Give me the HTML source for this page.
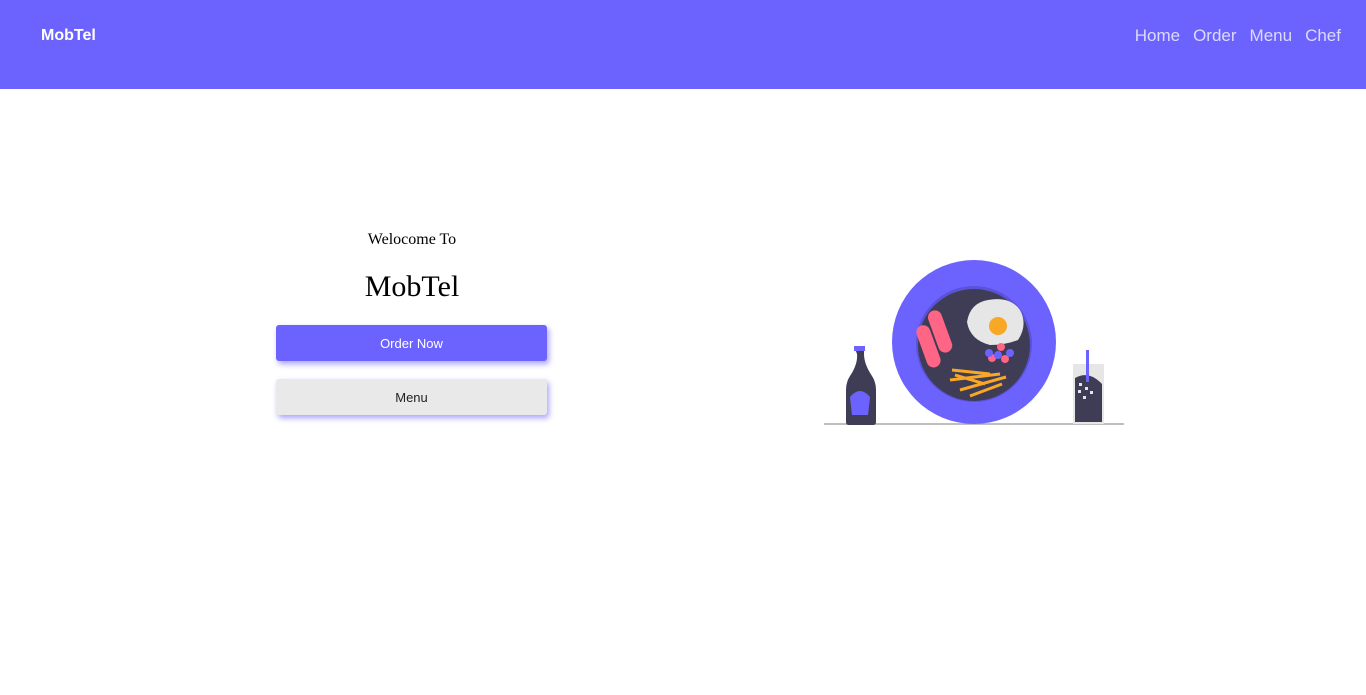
<!DOCTYPE html>
<html><head><style>
body{margin:0;width:1366px;height:695px;background:#fff;font-family:"Liberation Sans",sans-serif;overflow:hidden;position:relative}
.hdr{position:absolute;left:0;top:0;width:1366px;height:89px;background:#6c63ff}
.logo{position:absolute;left:41px;top:27px;color:#fff;font-weight:bold;font-size:16px}
.nav{position:absolute;right:25px;top:26px;color:#dcdaff;font-size:17px}
.nav span{margin-left:13px}
.t1{position:absolute;left:276px;width:272px;text-align:center;top:231px;font-family:"Liberation Serif",serif;font-size:16px;color:#000}
.t2{position:absolute;left:276px;width:272px;text-align:center;top:270px;font-family:"Liberation Serif",serif;font-size:30px;color:#000}
.b{position:absolute;left:276px;width:271px;height:36px;border-radius:3px;text-align:center;line-height:37px;font-size:13px;box-shadow:2px 3px 6px rgba(108,99,255,.6)}
</style></head><body>
<div class="hdr"><div class="logo">MobTel</div><div class="nav"><span>Home</span><span>Order</span><span>Menu</span><span>Chef</span></div></div>
<div class="t1">Welocome To</div>
<div class="t2">MobTel</div>
<div class="b" style="top:325px;background:#6c63ff;color:#fff">Order Now</div>
<div class="b" style="top:379px;background:#e9e9e9;color:#222">Menu</div>
<svg style="position:absolute;left:0;top:0" width="1366" height="695">
<line x1="824" y1="424" x2="1124" y2="424" stroke="#aaa" stroke-width="1.5"/>
<circle cx="974" cy="342" r="82" fill="#6c63ff"/>
<circle cx="974" cy="344" r="58" fill="#5a52d8"/>
<circle cx="974" cy="345" r="56" fill="#3f3d56"/>
<path d="M988 300 Q1010 296 1020 310 Q1028 325 1018 340 Q1005 345 990 345 Q970 340 967 322 Q970 303 988 300Z" fill="#e6e6e6"/>
<circle cx="998" cy="326" r="9" fill="#f9a826"/>
<g transform="rotate(-20 940 340)"><rect x="920" y="320" width="14" height="44" rx="7" fill="#ff6584"/><rect x="936" y="310" width="14" height="44" rx="7" fill="#ff6584"/></g>
<circle cx="1001" cy="347" r="4" fill="#ff6584"/><circle cx="992" cy="358" r="4" fill="#ff6584"/><circle cx="1005" cy="359" r="4" fill="#ff6584"/>
<circle cx="989" cy="353" r="4" fill="#6c63ff"/><circle cx="998" cy="355" r="4" fill="#6c63ff"/><circle cx="1010" cy="353" r="4" fill="#6c63ff"/>
<g stroke="#f9a826" stroke-width="3"><line x1="952" y1="370" x2="990" y2="374"/><line x1="950" y1="380" x2="1000" y2="374"/><line x1="960" y1="390" x2="1006" y2="377"/><line x1="970" y1="396" x2="1002" y2="384"/><line x1="955" y1="375" x2="985" y2="384"/></g>
<path d="M854 346 h10 v8 q0 10 8 22 q4 6 4 14 v32 q0 3 -3 3 h-24 q-3 0 -3 -3 v-32 q0 -8 4 -14 q8 -12 7 -22z" fill="#3f3d56"/>
<rect x="854" y="346" width="11" height="5" fill="#6c63ff"/>
<path d="M850 397 q10 -12 20 0 l-2 18 h-16z" fill="#6c63ff"/>
<rect x="1073" y="364" width="31" height="60" fill="#e6e6e6"/>
<path d="M1075 378 q14 -8 27 6 v38 h-27z" fill="#3f3d56"/>
<rect x="1086" y="350" width="3" height="32" fill="#6c63ff"/>
<g fill="#e6e6e6"><rect x="1079" y="383" width="3" height="3"/><rect x="1085" y="387" width="3" height="3"/><rect x="1078" y="390" width="3" height="3"/><rect x="1090" y="391" width="3" height="3"/><rect x="1083" y="396" width="3" height="3"/></g>
</svg>
</body></html>
